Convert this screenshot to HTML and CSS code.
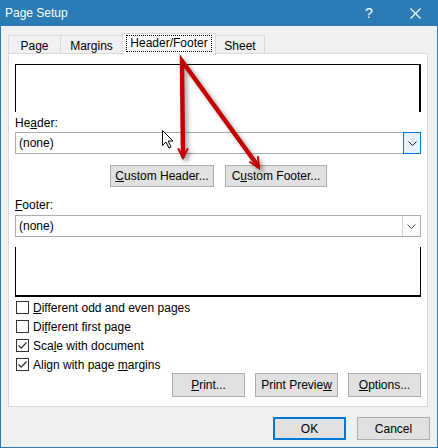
FILE: index.html
```html
<!DOCTYPE html>
<html>
<head>
<meta charset="utf-8">
<title>Page Setup</title>
<link rel="stylesheet" href="styles.css">
</head>
<body>
<div class="window">
  <div class="titlebar">
    <span class="title">Page Setup</span>
    <span class="caption-btn help">?</span>
    <span class="caption-btn close">
      <svg width="11" height="11" viewBox="0 0 11 11"><path d="M0.5 0.5 L10.5 10.5 M10.5 0.5 L0.5 10.5" stroke="#fff" stroke-width="1.1" fill="none"/></svg>
    </span>
  </div>

  <div class="tabs">
    <div class="tab tab-page">Page</div>
    <div class="tab tab-margins">Margins</div>
    <div class="tab tab-active"><span class="focus-ring">Header/Footer</span></div>
    <div class="tab tab-sheet">Sheet</div>
  </div>

  <div class="panel">
    <div class="preview preview-header"></div>

    <div class="field-label label-header">He<u>a</u>der:</div>
    <div class="combo">
      <span class="combo-text">(none)</span>
      <span class="combo-btn combo-btn-focus">
        <svg width="9" height="5" viewBox="0 0 9 5"><path d="M0.5 0.5 L4.5 4.5 L8.5 0.5" stroke="#222" stroke-width="1" fill="none"/></svg>
      </span>
    </div>

    <div class="custom-row">
      <button class="btn btn-custom-header"><u>C</u>ustom Header...</button>
      <button class="btn btn-custom-footer">C<u>u</u>stom Footer...</button>
    </div>

    <div class="field-label label-footer"><u>F</u>ooter:</div>
    <div class="combo">
      <span class="combo-text">(none)</span>
      <span class="combo-btn">
        <svg width="9" height="5" viewBox="0 0 9 5"><path d="M0.5 0.5 L4.5 4.5 L8.5 0.5" stroke="#555" stroke-width="1" fill="none"/></svg>
      </span>
    </div>

    <div class="preview preview-footer"></div>

    <div class="checks">
      <div class="check-row"><span class="box"></span><span><u>D</u>ifferent odd and even pages</span></div>
      <div class="check-row"><span class="box"></span><span>Di<u>f</u>ferent first page</span></div>
      <div class="check-row"><span class="box"><svg width="11" height="11" viewBox="0 0 11 11"><path d="M1.5 5.5 L4.2 8.2 L9.5 2.5" stroke="#333" stroke-width="1.2" fill="none"/></svg></span><span>Sca<u>l</u>e with document</span></div>
      <div class="check-row"><span class="box"><svg width="11" height="11" viewBox="0 0 11 11"><path d="M1.5 5.5 L4.2 8.2 L9.5 2.5" stroke="#333" stroke-width="1.2" fill="none"/></svg></span><span>Align with page <u>m</u>argins</span></div>
    </div>

    <div class="panel-buttons">
      <button class="btn btn-print"><u>P</u>rint...</button>
      <button class="btn btn-preview">Print Previe<u>w</u></button>
      <button class="btn btn-options"><u>O</u>ptions...</button>
    </div>
  </div>

  <div class="dialog-buttons">
    <button class="btn btn-ok">OK</button>
    <button class="btn btn-cancel">Cancel</button>
  </div>

  <svg class="annotations" width="438" height="448" viewBox="0 0 438 448">
    <g class="arrows" stroke="#c40000" fill="none" stroke-linecap="round">
      <path d="M183 156 L182 61 L258 166" stroke-width="4.5" stroke-linejoin="miter"/>
      <path d="M178.5 149 L183 158 L187.5 149" stroke-width="2"/>
      <path d="M250 162 L259 168 L258 157" stroke-width="2"/>
    </g>
    <path class="cursor" d="M162.5 130.5 L162.5 145.5 L166 142 L169 148 L171 147 L168.2 141 L173 141 Z" fill="#fff" stroke="#000" stroke-width="1"/>
  </svg>
</div>
</body>
</html>
```

FILE: styles.css
```css
* { box-sizing: border-box; }

html, body {
  margin: 0;
  padding: 0;
}

body {
  width: 438px;
  height: 448px;
  font-family: "Liberation Sans", Arial, sans-serif;
  font-size: 12px;
  color: #000;
  background: #f0f0f0;
}

.window {
  position: relative;
  width: 438px;
  height: 448px;
  background: #f0f0f0;
  border: 1px solid #2b7bb5;
  border-top: none;
  display: flex;
  flex-direction: column;
}

.titlebar {
  height: 26px;
  margin: 0 -1px;
  background: #2b7bb5;
  color: #fff;
  display: flex;
  align-items: center;
  padding-left: 5px;
  font-size: 12px;
}

.title {
  flex: 1;
}

.caption-btn {
  width: 46px;
  height: 26px;
  display: flex;
  align-items: center;
  justify-content: center;
}

.help {
  font-size: 14px;
}

.tabs {
  display: flex;
  align-items: flex-end;
  height: 21px;
  margin-top: 7px;
  padding-left: 7px;
}

.tab {
  height: 19px;
  border: 1px solid #d9d9d9;
  border-bottom: none;
  border-right: none;
  background: #f0f0f0;
  display: flex;
  align-items: center;
  justify-content: center;
  padding-top: 1px;
}

.tab-page { width: 52px; }
.tab-margins { width: 62px; }
.tab-sheet { width: 49px; border-right: 1px solid #d9d9d9; border-left: none; }

.tab-active {
  position: relative;
  z-index: 1;
  width: 94px;
  height: 22px;
  margin-bottom: -1px;
  background: #fff;
  border-right: 1px solid #d9d9d9;
  align-items: flex-start;
  padding-top: 1px;
}

.focus-ring {
  display: block;
  width: 86px;
  height: 17px;
  line-height: 15px;
  text-align: center;
  border: 1px dotted #000;
}

.panel {
  margin: -1px 9px 0 7px;
  height: 354px;
  background: #fff;
  border: 1px solid #d9d9d9;
  display: flex;
  flex-direction: column;
  padding: 0 5px 0 6px;
}

.preview {
  width: 406px;
  border-color: #000;
  border-style: solid;
}

.preview-header {
  margin-top: 10px;
  height: 48px;
  border-width: 1px 2px 0 1px;
}

.preview-footer {
  margin-top: 10px;
  height: 50px;
  border-width: 0 1px 2px 1px;
}

.field-label {
  height: 15px;
  line-height: 15px;
}

.label-header { margin-top: 4px; }
.label-footer { margin-top: 11px; }

.combo {
  width: 406px;
  height: 22px;
  border: 1px solid #adadad;
  display: flex;
  align-items: center;
  margin-top: 2px;
}

.label-header + .combo { margin-top: 1px; }

.combo-text {
  flex: 1;
  padding-left: 3px;
}

.combo-btn {
  width: 18px;
  height: 20px;
  border-left: 1px solid #d4d4d4;
  background: #fbfbfb;
  display: flex;
  align-items: center;
  justify-content: center;
}

.combo-btn-focus {
  width: 18px;
  height: 22px;
  margin: -1px -1px -1px 0;
  border: 1px solid #0078d7;
  background: #e5f1fb;
}

.btn {
  font-family: "Liberation Sans", Arial, sans-serif;
  font-size: 12px;
  color: #000;
  background: #e1e1e1;
  border: 1px solid #adadad;
  border-radius: 0;
  padding: 0;
  margin: 0;
  height: 22px;
  text-align: center;
}

.custom-row {
  display: flex;
  justify-content: center;
  gap: 11px;
  margin-top: 11px;
}

.btn-custom-header { width: 104px; }
.btn-custom-footer { width: 102px; }

.checks {
  display: flex;
  flex-direction: column;
  margin-top: 1px;
}

.check-row {
  height: 19px;
  display: flex;
  align-items: center;
  gap: 4px;
  padding-left: 1px;
}

.box {
  width: 13px;
  height: 13px;
  border: 1px solid #333;
  background: #fff;
  display: flex;
  align-items: center;
  justify-content: center;
}

.panel-buttons {
  display: flex;
  justify-content: flex-end;
  gap: 10px;
  margin-top: -1px;
  padding-right: 1px;
}

.panel-buttons .btn { height: 24px; }
.btn-print { width: 73px; }
.btn-preview { width: 83px; }
.btn-options { width: 73px; }

.dialog-buttons {
  display: flex;
  justify-content: flex-end;
  gap: 11px;
  margin-top: 10px;
  padding-right: 7px;
}

.dialog-buttons .btn {
  width: 73px;
  height: 23px;
}

.btn-ok {
  border: 2px solid #0078d7;
}

.annotations {
  position: absolute;
  top: 0;
  left: -1px;
  pointer-events: none;
}

.arrows {
  filter: drop-shadow(3px 3px 2px rgba(0, 0, 0, 0.35));
}
```
